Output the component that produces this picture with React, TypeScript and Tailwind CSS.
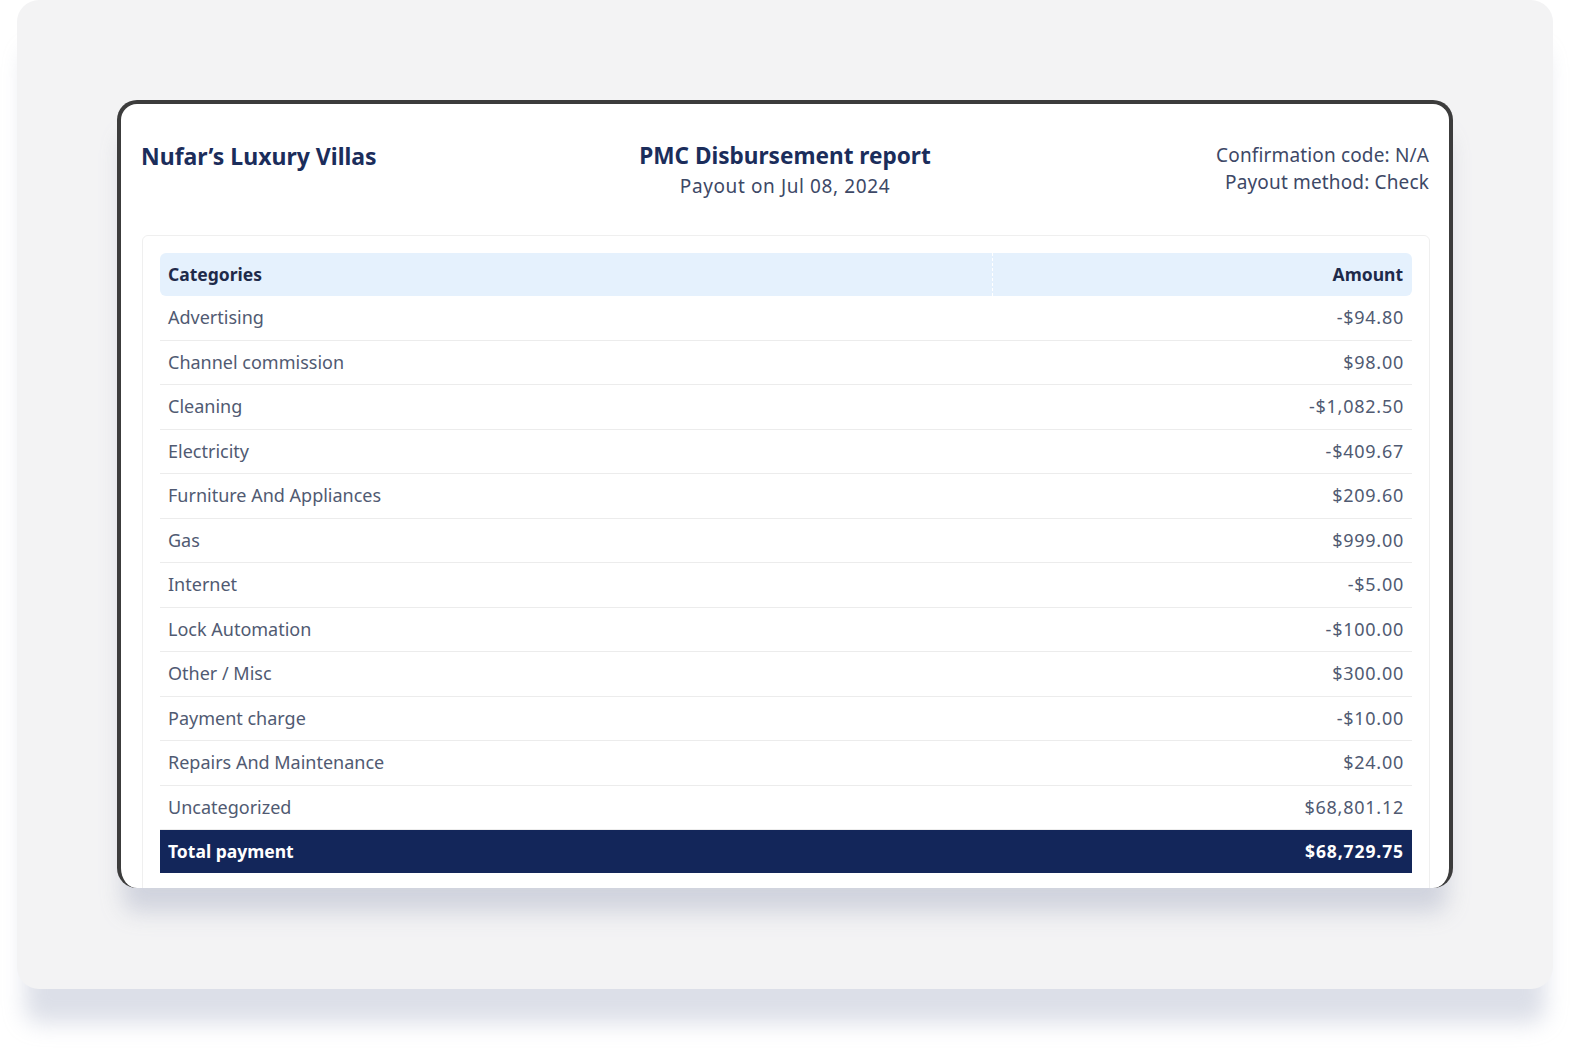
import React from "react";

const rows: [string, string][] = [
  ["Advertising", "-$94.80"],
  ["Channel commission", "$98.00"],
  ["Cleaning", "-$1,082.50"],
  ["Electricity", "-$409.67"],
  ["Furniture And Appliances", "$209.60"],
  ["Gas", "$999.00"],
  ["Internet", "-$5.00"],
  ["Lock Automation", "-$100.00"],
  ["Other / Misc", "$300.00"],
  ["Payment charge", "-$10.00"],
  ["Repairs And Maintenance", "$24.00"],
  ["Uncategorized", "$68,801.12"],
];

export default function App() {
  return (
    <div className="min-h-[1049px] w-[1570px] bg-white font-['Noto_Sans',sans-serif]">
      <div className="mx-[17px] h-[989px] rounded-[22px] bg-[#f3f3f4] px-[100px] pt-[100px] shadow-[0_42px_22px_-8px_rgba(208,212,224,0.75)]">
        <div className="h-[788px] overflow-hidden rounded-[20px] border-x-4 border-t-4 border-b-0 border-[#3c3c3c] bg-white shadow-[0_30px_22px_-6px_rgba(200,204,216,0.8)]">
          <div className="grid grid-cols-3 px-[20px] pt-[37px]">
            <div className="text-[23px] font-bold leading-[30px] text-[#1b2d5b]">
              Nufar’s Luxury Villas
            </div>
            <div className="text-center">
              <div className="text-[22.6px] font-bold leading-[30px] text-[#1b2d5b]">
                PMC Disbursement report
              </div>
              <div className="text-[19px] leading-[30px] tracking-[0.6px] text-[#3d4866]">
                Payout on Jul 08, 2024
              </div>
            </div>
            <div className="mt-[1px] text-right text-[19px] leading-[27px] tracking-[0.15px] text-[#3d4866]">
              <div>Confirmation code: N/A</div>
              <div>Payout method: Check</div>
            </div>
          </div>
          <div className="ml-[21px] mr-[19px] mt-[34px] h-[700px] rounded-[6px] border border-[#efefef] px-[17px] pt-[17px]">
            <div className="flex h-[43px] items-center rounded-[6px] bg-[#e5f1fd] text-[17.5px] font-bold text-[#1e2a4a]">
              <div className="flex h-full w-[833px] items-center border-r border-dashed border-white pl-[8px]">
                Categories
              </div>
              <div className="flex-1 pr-[9px] text-right">Amount</div>
            </div>
            {rows.map(([c, a]) => (
              <div
                key={c}
                className="flex h-[44.5px] items-center justify-between border-b border-[#ececec] px-[8px] pr-[8px] text-[18px] text-[#505a72]"
              >
                <span>{c}</span>
                <span className="tracking-[0.75px]">{a}</span>
              </div>
            ))}
            <div className="flex h-[43px] items-center justify-between bg-[#13265a] px-[8px] pr-[8px] text-[17.5px] font-bold text-white">
              <span>Total payment</span>
              <span className="tracking-[0.9px]">$68,729.75</span>
            </div>
          </div>
        </div>
      </div>
    </div>
  );
}
